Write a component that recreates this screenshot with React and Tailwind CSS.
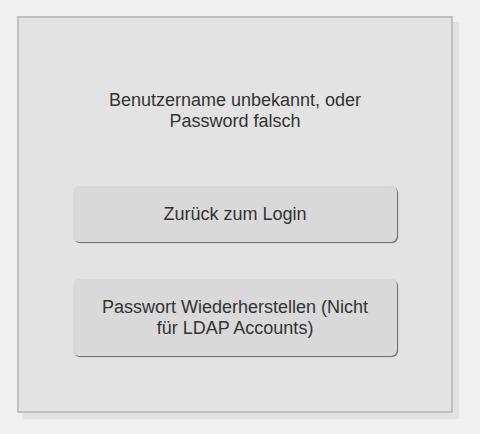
export default function App() {
  return (
    <main className="min-h-[434px] w-[480px] bg-[#f0f0f0] pl-[17px] pt-[16px] font-['Liberation_Sans',Arial,sans-serif] text-[#333]">
      <div className="flex h-[397px] w-[436px] flex-col items-center border-2 border-[#c0c0c0] bg-[#e3e3e3] shadow-[6px_6px_1px_#e2e2e2]">
        <p className="mt-[72px] w-3/4 text-center text-[18px] leading-[21px]">
          Benutzername unbekannt, oder Password falsch
        </p>

        {/* actions */}
        <button className="mt-[54px] w-3/4 rounded-[6px] bg-[#d9d9d9] px-[24px] py-[17.5px] text-[18px] leading-[21px] text-[#333] shadow-[1px_1px_1px_#666]">
          Zurück zum Login
        </button>
        <button className="mt-[37px] w-3/4 rounded-[6px] bg-[#d9d9d9] px-[24px] py-[17.5px] text-[18px] leading-[21px] text-[#333] shadow-[1px_1px_1px_#666]">
          Passwort Wiederherstellen (Nicht für LDAP Accounts)
        </button>
      </div>
    </main>
  );
}
